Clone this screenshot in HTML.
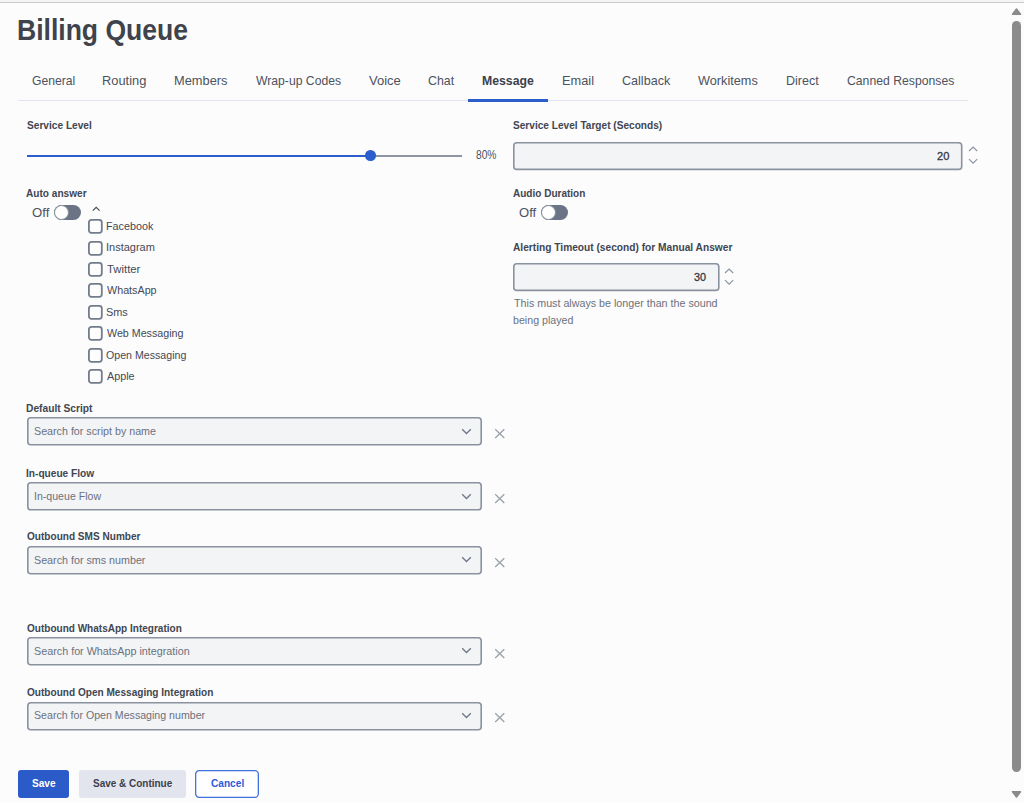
<!DOCTYPE html>
<html><head><meta charset="utf-8"><style>
html,body{margin:0;padding:0;}
body{width:1024px;height:802px;overflow:hidden;background:#fcfcfc;position:relative;font-family:"Liberation Sans",sans-serif;}
body>div,body>svg,body>span{position:absolute;}
body>span{white-space:nowrap;line-height:normal;transform-origin:0 0;}
svg{overflow:visible}
</style></head><body>
<div style="left:0px;top:0px;width:1024px;height:2px;background:#f3f4f6"></div>
<div style="left:0px;top:2px;width:1024px;height:1px;background:#cbcbcb"></div>
<div style="left:18px;top:100px;width:950px;height:1px;background:#dfe4ee"></div>
<div style="left:468px;top:99px;width:80px;height:3px;background:#2b5dcc"></div>
<div style="left:27px;top:154.6px;width:343px;height:2px;background:#2b5dcc"></div>
<div style="left:370px;top:154.6px;width:92px;height:2px;background:#8d95a3"></div>
<div style="left:365px;top:150.4px;width:10.6px;height:10.6px;background:#2b5dcc;border-radius:50%"></div>
<svg style="left:513.3px;top:141.6px" width="449.5" height="28.2"><rect x="0.8" y="0.8" width="447.9" height="26.599999999999998" rx="3" fill="#f3f4f6" stroke="#8a929f" stroke-width="1.6"/></svg>
<svg style="left:967.8px;top:145.8px" width="11" height="7" viewBox="0 0 11 7"><path d="M1.0 5.0 L5.1 1.0 L9.2 5.0" fill="none" stroke="#8d96a3" stroke-width="1.25"/></svg>
<svg style="left:967.8px;top:158.1px" width="11" height="7" viewBox="0 0 11 7"><path d="M1.0 1.1 L5.1 5.1 L9.2 1.1" fill="none" stroke="#8d96a3" stroke-width="1.25"/></svg>
<div style="left:54.2px;top:205px;width:27px;height:15px;background:#6b7484;border-radius:7.5px"></div>
<div style="left:55.1px;top:205.8px;width:13.4px;height:13.4px;background:#fff;box-shadow:0 0 0 0.9px #8f97a4;border-radius:50%"></div>
<div style="left:541px;top:205px;width:27px;height:15px;background:#6b7484;border-radius:7.5px"></div>
<div style="left:541.9px;top:205.8px;width:13.4px;height:13.4px;background:#fff;box-shadow:0 0 0 0.9px #8f97a4;border-radius:50%"></div>
<svg style="left:91px;top:206px" width="10" height="7" viewBox="0 0 10 7"><path d="M1.8 4.7 L5.2 1.3 L8.6 4.7" fill="none" stroke="#464b55" stroke-width="1.2"/></svg>
<svg style="left:88.2px;top:219.1px" width="14.7" height="14.7"><rect x="0.9" y="0.9" width="12.899999999999999" height="12.899999999999999" rx="2.5" fill="#fdfdfd" stroke="#737c8b" stroke-width="1.8"/></svg>
<svg style="left:88.2px;top:240.53px" width="14.7" height="14.7"><rect x="0.9" y="0.9" width="12.899999999999999" height="12.899999999999999" rx="2.5" fill="#fdfdfd" stroke="#737c8b" stroke-width="1.8"/></svg>
<svg style="left:88.2px;top:261.96px" width="14.7" height="14.7"><rect x="0.9" y="0.9" width="12.899999999999999" height="12.899999999999999" rx="2.5" fill="#fdfdfd" stroke="#737c8b" stroke-width="1.8"/></svg>
<svg style="left:88.2px;top:283.39px" width="14.7" height="14.7"><rect x="0.9" y="0.9" width="12.899999999999999" height="12.899999999999999" rx="2.5" fill="#fdfdfd" stroke="#737c8b" stroke-width="1.8"/></svg>
<svg style="left:88.2px;top:304.82px" width="14.7" height="14.7"><rect x="0.9" y="0.9" width="12.899999999999999" height="12.899999999999999" rx="2.5" fill="#fdfdfd" stroke="#737c8b" stroke-width="1.8"/></svg>
<svg style="left:88.2px;top:326.25px" width="14.7" height="14.7"><rect x="0.9" y="0.9" width="12.899999999999999" height="12.899999999999999" rx="2.5" fill="#fdfdfd" stroke="#737c8b" stroke-width="1.8"/></svg>
<svg style="left:88.2px;top:347.67999999999995px" width="14.7" height="14.7"><rect x="0.9" y="0.9" width="12.899999999999999" height="12.899999999999999" rx="2.5" fill="#fdfdfd" stroke="#737c8b" stroke-width="1.8"/></svg>
<svg style="left:88.2px;top:369.11px" width="14.7" height="14.7"><rect x="0.9" y="0.9" width="12.899999999999999" height="12.899999999999999" rx="2.5" fill="#fdfdfd" stroke="#737c8b" stroke-width="1.8"/></svg>
<svg style="left:513.4px;top:263.1px" width="206.6" height="28.2"><rect x="0.8" y="0.8" width="205.0" height="26.599999999999998" rx="3" fill="#f3f4f6" stroke="#8a929f" stroke-width="1.6"/></svg>
<svg style="left:724px;top:267.9px" width="11" height="7" viewBox="0 0 11 7"><path d="M1.0 5.0 L5.1 1.0 L9.2 5.0" fill="none" stroke="#8d96a3" stroke-width="1.25"/></svg>
<svg style="left:724px;top:279.2px" width="11" height="7" viewBox="0 0 11 7"><path d="M1.0 1.1 L5.1 5.1 L9.2 1.1" fill="none" stroke="#8d96a3" stroke-width="1.25"/></svg>
<svg style="left:27px;top:417.3px" width="455" height="28.6"><rect x="0.8" y="0.8" width="453.4" height="27.0" rx="3" fill="#f3f4f6" stroke="#8a929f" stroke-width="1.6"/></svg>
<svg style="left:461px;top:427.7px" width="11" height="7" viewBox="0 0 11 7"><path d="M1.2 1.2 L5.5 5.5 L9.8 1.2" fill="none" stroke="#6e7787" stroke-width="1.3"/></svg>
<svg style="left:494px;top:428.2px" width="12" height="11" viewBox="0 0 12 11"><path d="M1.2 1.2 L10.3 10 M10.3 1.2 L1.2 10" fill="none" stroke="#9aa1ab" stroke-width="1.3"/></svg>
<svg style="left:27px;top:482.3px" width="455" height="28.6"><rect x="0.8" y="0.8" width="453.4" height="27.0" rx="3" fill="#f3f4f6" stroke="#8a929f" stroke-width="1.6"/></svg>
<svg style="left:461px;top:492.7px" width="11" height="7" viewBox="0 0 11 7"><path d="M1.2 1.2 L5.5 5.5 L9.8 1.2" fill="none" stroke="#6e7787" stroke-width="1.3"/></svg>
<svg style="left:494px;top:493.2px" width="12" height="11" viewBox="0 0 12 11"><path d="M1.2 1.2 L10.3 10 M10.3 1.2 L1.2 10" fill="none" stroke="#9aa1ab" stroke-width="1.3"/></svg>
<svg style="left:27px;top:545.7px" width="455" height="28.6"><rect x="0.8" y="0.8" width="453.4" height="27.0" rx="3" fill="#f3f4f6" stroke="#8a929f" stroke-width="1.6"/></svg>
<svg style="left:461px;top:556.1px" width="11" height="7" viewBox="0 0 11 7"><path d="M1.2 1.2 L5.5 5.5 L9.8 1.2" fill="none" stroke="#6e7787" stroke-width="1.3"/></svg>
<svg style="left:494px;top:556.6px" width="12" height="11" viewBox="0 0 12 11"><path d="M1.2 1.2 L10.3 10 M10.3 1.2 L1.2 10" fill="none" stroke="#9aa1ab" stroke-width="1.3"/></svg>
<svg style="left:27px;top:636.6px" width="455" height="28.6"><rect x="0.8" y="0.8" width="453.4" height="27.0" rx="3" fill="#f3f4f6" stroke="#8a929f" stroke-width="1.6"/></svg>
<svg style="left:461px;top:647.0px" width="11" height="7" viewBox="0 0 11 7"><path d="M1.2 1.2 L5.5 5.5 L9.8 1.2" fill="none" stroke="#6e7787" stroke-width="1.3"/></svg>
<svg style="left:494px;top:647.5px" width="12" height="11" viewBox="0 0 12 11"><path d="M1.2 1.2 L10.3 10 M10.3 1.2 L1.2 10" fill="none" stroke="#9aa1ab" stroke-width="1.3"/></svg>
<svg style="left:27px;top:701.5px" width="455" height="28.6"><rect x="0.8" y="0.8" width="453.4" height="27.0" rx="3" fill="#f3f4f6" stroke="#8a929f" stroke-width="1.6"/></svg>
<svg style="left:461px;top:711.9px" width="11" height="7" viewBox="0 0 11 7"><path d="M1.2 1.2 L5.5 5.5 L9.8 1.2" fill="none" stroke="#6e7787" stroke-width="1.3"/></svg>
<svg style="left:494px;top:712.4px" width="12" height="11" viewBox="0 0 12 11"><path d="M1.2 1.2 L10.3 10 M10.3 1.2 L1.2 10" fill="none" stroke="#9aa1ab" stroke-width="1.3"/></svg>
<div style="left:18px;top:770px;width:51px;height:28px;background:#2a5bc9;border-radius:3px"></div>
<div style="left:79px;top:770px;width:107px;height:28px;background:#e2e5ed;border-radius:3px"></div>
<svg style="left:195px;top:770px" width="64" height="28"><rect x="0.65" y="0.65" width="62.7" height="26.7" rx="3.5" fill="#ffffff" stroke="#4171dc" stroke-width="1.3"/></svg>
<svg style="left:1011px;top:7px" width="11" height="9" viewBox="0 0 11 9"><path d="M5.5 2.0 L9.5 7.3 L1.5 7.3 Z" fill="#8b8b8b" stroke="#8b8b8b" stroke-width="1.5" stroke-linejoin="round"/></svg>
<div style="left:1012px;top:21px;width:9px;height:751px;background:#8b8b8b;border-radius:4.5px"></div>
<svg style="left:1011px;top:790px" width="11" height="9" viewBox="0 0 11 9"><path d="M1.5 1.7 L9.5 1.7 L5.5 7.0 Z" fill="#8b8b8b" stroke="#8b8b8b" stroke-width="1.5" stroke-linejoin="round"/></svg>
<span style="left:17.43px;top:12.60px;font-weight:700;font-size:29.8px;transform:scaleX(0.8904);color:#3f434b;">Billing Queue</span>
<span style="left:31.89px;top:73.00px;font-weight:400;font-size:13.2px;transform:scaleX(0.923);color:#4c5260;">General</span>
<span style="left:102.41px;top:73.00px;font-weight:400;font-size:13.2px;transform:scaleX(0.9743);color:#4c5260;">Routing</span>
<span style="left:173.72px;top:73.00px;font-weight:400;font-size:13.2px;transform:scaleX(0.9725);color:#4c5260;">Members</span>
<span style="left:255.72px;top:73.00px;font-weight:400;font-size:13.2px;transform:scaleX(0.9232);color:#4c5260;">Wrap-up Codes</span>
<span style="left:368.65px;top:73.00px;font-weight:400;font-size:13.2px;transform:scaleX(0.9871);color:#4c5260;">Voice</span>
<span style="left:428.08px;top:73.00px;font-weight:400;font-size:13.2px;transform:scaleX(0.937);color:#4c5260;">Chat</span>
<span style="left:482.29px;top:73.00px;font-weight:700;font-size:13.2px;transform:scaleX(0.9288);color:#3b404b;">Message</span>
<span style="left:561.72px;top:73.00px;font-weight:400;font-size:13.2px;transform:scaleX(0.972);color:#4c5260;">Email</span>
<span style="left:621.65px;top:73.00px;font-weight:400;font-size:13.2px;transform:scaleX(0.9529);color:#4c5260;">Callback</span>
<span style="left:698.11px;top:73.00px;font-weight:400;font-size:13.2px;transform:scaleX(0.964);color:#4c5260;">Workitems</span>
<span style="left:785.93px;top:73.00px;font-weight:400;font-size:13.2px;transform:scaleX(0.9512);color:#4c5260;">Direct</span>
<span style="left:847.19px;top:73.00px;font-weight:400;font-size:13.2px;transform:scaleX(0.9261);color:#4c5260;">Canned Responses</span>
<span style="left:26.55px;top:118.80px;font-weight:700;font-size:11.3px;transform:scaleX(0.8974);color:#414651;">Service Level</span>
<span style="left:475.94px;top:147.80px;font-weight:400;font-size:12px;transform:scaleX(0.852);color:#4c5260;">80%</span>
<span style="left:513.35px;top:119.00px;font-weight:700;font-size:11.3px;transform:scaleX(0.8942);color:#414651;">Service Level Target (Seconds)</span>
<span style="left:936.62px;top:148.80px;font-weight:400;font-size:11.6px;transform:scaleX(0.9585);color:#333842;-webkit-text-stroke:0.3px #333842;">20</span>
<span style="left:26.40px;top:187.10px;font-weight:700;font-size:11.3px;transform:scaleX(0.8936);color:#414651;">Auto answer</span>
<span style="left:31.83px;top:204.90px;font-weight:400;font-size:13px;transform:scaleX(1.0123);color:#4c5260;">Off</span>
<span style="left:106.20px;top:220.00px;font-weight:400;font-size:11.2px;transform:scaleX(0.9652);color:#444955;">Facebook</span>
<span style="left:106.11px;top:241.43px;font-weight:400;font-size:11.2px;transform:scaleX(0.9812);color:#444955;">Instagram</span>
<span style="left:106.50px;top:262.86px;font-weight:400;font-size:11.2px;transform:scaleX(1.0122);color:#444955;">Twitter</span>
<span style="left:106.68px;top:284.29px;font-weight:400;font-size:11.2px;transform:scaleX(0.9609);color:#444955;">WhatsApp</span>
<span style="left:106.28px;top:305.72px;font-weight:400;font-size:11.2px;transform:scaleX(0.973);color:#444955;">Sms</span>
<span style="left:106.69px;top:327.15px;font-weight:400;font-size:11.2px;transform:scaleX(0.9556);color:#444955;">Web Messaging</span>
<span style="left:106.45px;top:348.58px;font-weight:400;font-size:11.2px;transform:scaleX(0.9502);color:#444955;">Open Messaging</span>
<span style="left:106.69px;top:370.01px;font-weight:400;font-size:11.2px;transform:scaleX(0.9654);color:#444955;">Apple</span>
<span style="left:513.00px;top:187.30px;font-weight:700;font-size:11.3px;transform:scaleX(0.8865);color:#414651;">Audio Duration</span>
<span style="left:518.63px;top:204.60px;font-weight:400;font-size:13px;transform:scaleX(1.0063);color:#4c5260;">Off</span>
<span style="left:513.18px;top:241.00px;font-weight:700;font-size:11.3px;transform:scaleX(0.9007);color:#414651;">Alerting Timeout (second) for Manual Answer</span>
<span style="left:693.51px;top:269.80px;font-weight:400;font-size:11.6px;transform:scaleX(0.9294);color:#333842;-webkit-text-stroke:0.3px #333842;">30</span>
<span style="left:513.55px;top:296.50px;font-weight:400;font-size:11.2px;transform:scaleX(0.9572);color:#6b717d;">This must always be longer than the sound</span>
<span style="left:513.32px;top:314.00px;font-weight:400;font-size:11.2px;transform:scaleX(0.9517);color:#6b717d;">being played</span>
<span style="left:26.38px;top:402.20px;font-weight:700;font-size:11.3px;transform:scaleX(0.9041);color:#414651;">Default Script</span>
<span style="left:34.43px;top:423.80px;font-weight:400;font-size:11.6px;transform:scaleX(0.9235);color:#6b717d;">Search for script by name</span>
<span style="left:26.39px;top:467.00px;font-weight:700;font-size:11.3px;transform:scaleX(0.8979);color:#414651;">In-queue Flow</span>
<span style="left:34.29px;top:489.00px;font-weight:400;font-size:11.6px;transform:scaleX(0.9125);color:#6b717d;">In-queue Flow</span>
<span style="left:26.57px;top:530.30px;font-weight:700;font-size:11.3px;transform:scaleX(0.8911);color:#414651;">Outbound SMS Number</span>
<span style="left:34.43px;top:552.70px;font-weight:400;font-size:11.6px;transform:scaleX(0.9247);color:#6b717d;">Search for sms number</span>
<span style="left:26.58px;top:621.80px;font-weight:700;font-size:11.3px;transform:scaleX(0.8873);color:#414651;">Outbound WhatsApp Integration</span>
<span style="left:34.43px;top:644.20px;font-weight:400;font-size:11.6px;transform:scaleX(0.9294);color:#6b717d;">Search for WhatsApp integration</span>
<span style="left:26.57px;top:686.20px;font-weight:700;font-size:11.3px;transform:scaleX(0.8918);color:#414651;">Outbound Open Messaging Integration</span>
<span style="left:34.44px;top:707.80px;font-weight:400;font-size:11.6px;transform:scaleX(0.9156);color:#6b717d;">Search for Open Messaging number</span>
<span style="left:32.16px;top:777.00px;font-weight:700;font-size:11.5px;transform:scaleX(0.8792);color:#ffffff;">Save</span>
<span style="left:92.77px;top:777.00px;font-weight:700;font-size:11.5px;transform:scaleX(0.8667);color:#3b404b;">Save &amp; Continue</span>
<span style="left:210.58px;top:776.70px;font-weight:700;font-size:11.5px;transform:scaleX(0.8802);color:#2a5bd7;">Cancel</span>
</body></html>
